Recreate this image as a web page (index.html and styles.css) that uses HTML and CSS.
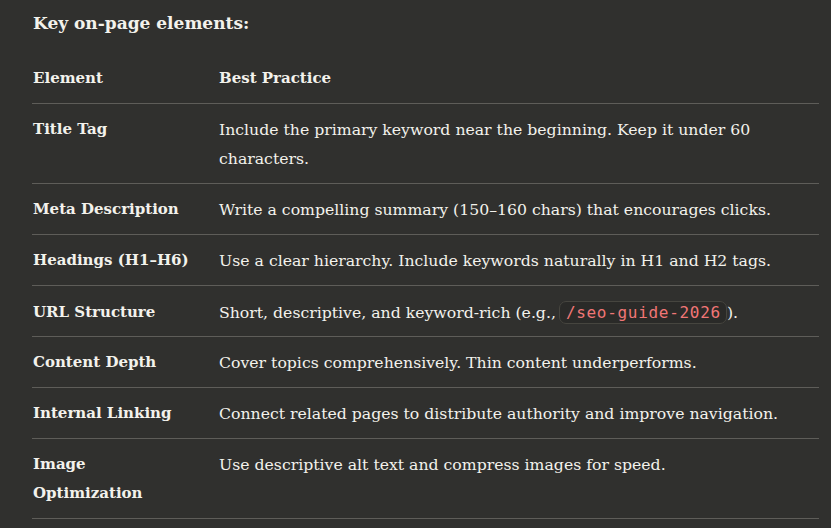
FILE: index.html
```html
<!DOCTYPE html>
<html lang="en">
<head>
<meta charset="utf-8">
<title>Key on-page elements</title>
<link rel="stylesheet" href="styles.css">
</head>
<body>
<main class="content">
  <p class="lead"><strong>Key on-page elements:</strong></p>
  <table class="grid">
    <colgroup><col class="c1"><col class="c2"></colgroup>
    <thead>
      <tr><th>Element</th><th>Best Practice</th></tr>
    </thead>
    <tbody>
      <tr><td class="name">Title Tag</td><td>Include the primary keyword near the beginning. Keep it under 60 characters.</td></tr>
      <tr><td class="name">Meta Description</td><td>Write a compelling summary (150–160 chars) that encourages clicks.</td></tr>
      <tr><td class="name">Headings (H1–H6)</td><td>Use a clear hierarchy. Include keywords naturally in H1 and H2 tags.</td></tr>
      <tr class="row-code"><td class="name">URL Structure</td><td>Short, descriptive, and keyword-rich (e.g., <code class="code">/seo-guide-2026</code>).</td></tr>
      <tr><td class="name">Content Depth</td><td>Cover topics comprehensively. Thin content underperforms.</td></tr>
      <tr><td class="name">Internal Linking</td><td>Connect related pages to distribute authority and improve navigation.</td></tr>
      <tr><td class="name">Image Optimization</td><td>Use descriptive alt text and compress images for speed.</td></tr>
    </tbody>
  </table>
</main>
</body>
</html>
```
FILE: styles.css
```css
html, body {
  margin: 0;
  padding: 0;
  background: #30302e;
}
body {
  color: #f3f2ec;
  font-family: "DejaVu Serif", "Liberation Serif", serif;
  font-size: 15.7px;
  line-height: 29px;
}
.content {
  padding: 9px 12px 0 32px;
}
.lead {
  margin: 0 0 16px 1px;
  font-size: 17px;
  line-height: 28px;
}
.lead strong { font-weight: 700; }
.grid {
  width: 787px;
  border-collapse: collapse;
  table-layout: fixed;
}
.c1 { width: 186px; }
.grid th, .grid td {
  text-align: left;
  vertical-align: top;
  padding: 11px 24px 10px 1px;
  border-bottom: 1px solid #5e5d59;
}
.grid .row-code td { padding-top: 12px; padding-bottom: 9px; }
.grid th {
  font-weight: 700;
  font-size: 15px;
}
.grid td.name {
  font-weight: 700;
  font-size: 15px;
}
.code {
  font-family: "DejaVu Sans Mono", "Liberation Mono", monospace;
  font-size: 16px;
  letter-spacing: 0.7px;
  line-height: 22px;
  color: #f07676;
  background: #2a2a28;
  border: 1px solid #46453f;
  border-radius: 7px;
  padding: 1px 5px 1px 6px;
  margin-left: -2px;
}
```
